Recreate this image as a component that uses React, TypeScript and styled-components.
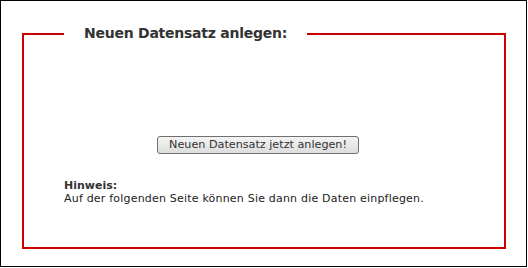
import React from "react";
import styled, { createGlobalStyle } from "styled-components";

const GlobalStyle = createGlobalStyle`
  html, body {
    margin: 0;
    padding: 0;
    background: #ffffff;
  }
  body {
    font-family: Verdana, "DejaVu Sans", sans-serif;
    color: #222222;
  }
`;

const Frame = styled.div`
  box-sizing: border-box;
  width: 527px;
  height: 267px;
  border: 1px solid #000000;
  padding: 24px 20px 0 21px;
  background: #ffffff;
`;

const Box = styled.fieldset`
  box-sizing: border-box;
  margin: 0;
  width: 484px;
  height: 224px;
  border: 2px solid #cc0000;
  padding: 0 30px 0 40px;
  display: flex;
  flex-direction: column;
`;

const Title = styled.legend`
  padding: 0 20px;
  font-size: 14px;
  line-height: 17px;
  font-weight: bold;
  letter-spacing: -0.25px;
  color: #333333;
`;

const ButtonRow = styled.div`
  display: flex;
  justify-content: center;
  margin-top: 94px;
  padding-right: 22px;
`;

const Button = styled.button`
  height: 18px;
  padding: 0 11px;
  font-family: Verdana, "DejaVu Sans", sans-serif;
  font-size: 11.2px;
  line-height: 16px;
  color: #333333;
  border: 1px solid #707070;
  border-radius: 3px;
  background: linear-gradient(#f4f4f4, #dddddd);
  cursor: pointer;
`;

const Note = styled.div`
  margin-top: 26px;
  font-size: 11px;
  line-height: 12px;
  letter-spacing: 0.2px;
  color: #222222;
`;

const NoteLabel = styled.div`
  font-weight: bold;
  letter-spacing: 0;
  color: #333333;
  margin-bottom: 1px;
`;

export default function App() {
  return (
    <>
      <GlobalStyle />
      <Frame>
        <Box>
          <Title>Neuen Datensatz anlegen:</Title>
          <ButtonRow>
            <Button type="button">Neuen Datensatz jetzt anlegen!</Button>
          </ButtonRow>
          <Note>
            <NoteLabel>Hinweis:</NoteLabel>
            Auf der folgenden Seite können Sie dann die Daten einpflegen.
          </Note>
        </Box>
      </Frame>
    </>
  );
}
